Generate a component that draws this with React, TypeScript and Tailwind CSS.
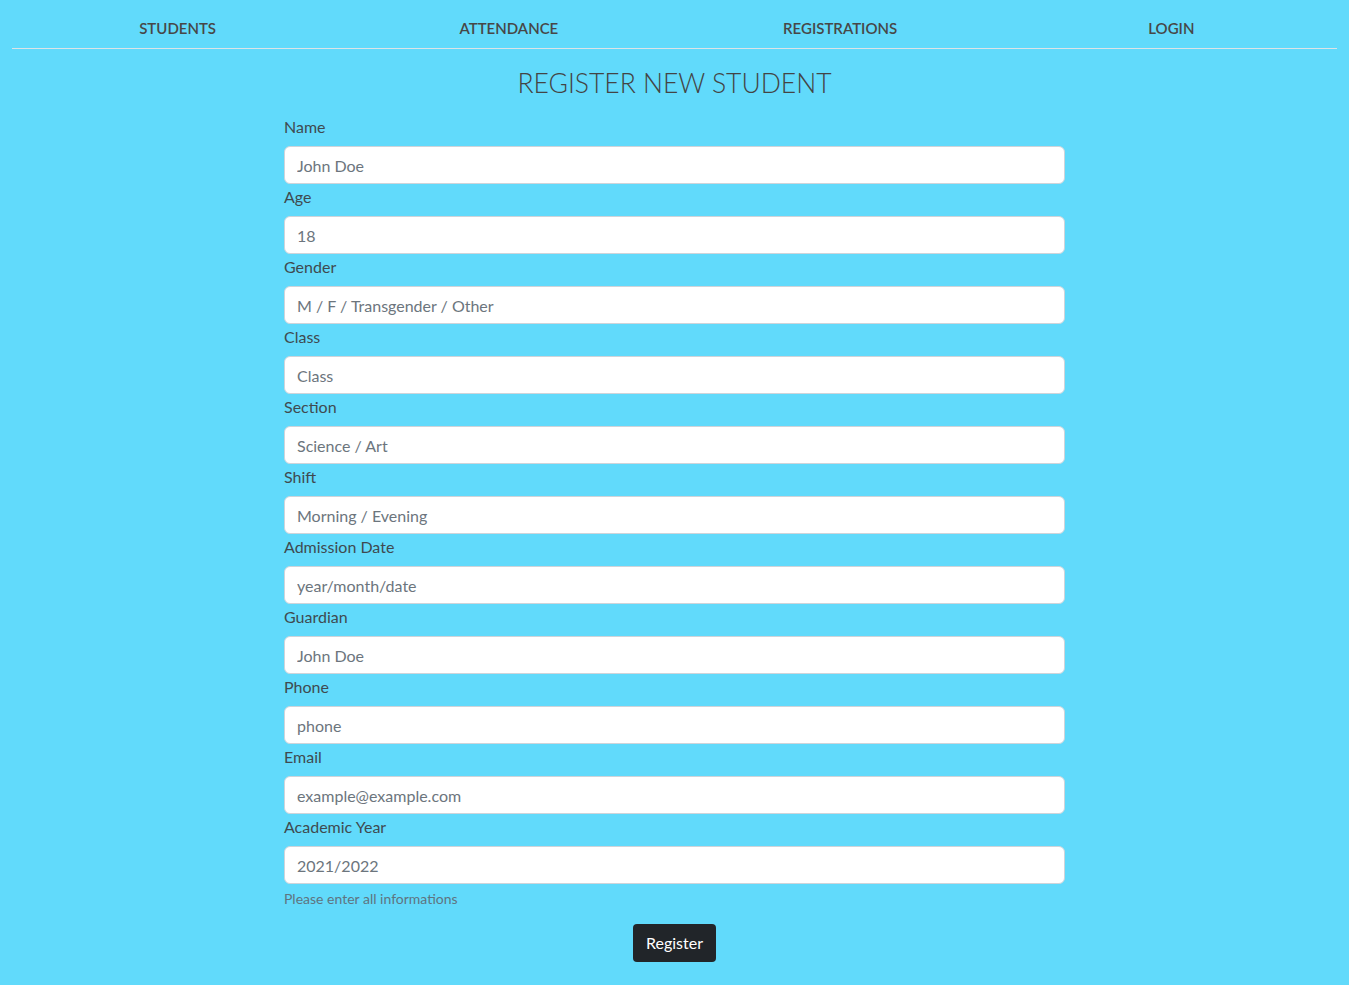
import React from "react";

const fields: [string, string][] = [
  ["Name", "John Doe"],
  ["Age", "18"],
  ["Gender", "M / F / Transgender / Other"],
  ["Class", "Class"],
  ["Section", "Science / Art"],
  ["Shift", "Morning / Evening"],
  ["Admission Date", "year/month/date"],
  ["Guardian", "John Doe"],
  ["Phone", "phone"],
  ["Email", "example@example.com"],
  ["Academic Year", "2021/2022"],
];

export default function App() {
  return (
    <div
      className="min-h-[985px] bg-[#61dafb] text-[#444]"
      style={{ fontFamily: '"Segoe UI", "Lato", "Noto Sans", sans-serif' }}
    >
      <nav className="mx-3 grid grid-cols-4 border-b border-[#dde3e6] h-[49px]">
        {["STUDENTS", "ATTENDANCE", "REGISTRATIONS", "LOGIN"].map((t) => (
          <div key={t} className="flex items-center justify-center text-[15px] font-semibold text-[#474747] pt-[8px]">
            {t}
          </div>
        ))}
      </nav>
      <h2 className="text-center text-[26.5px] font-light text-[#444] leading-[36px] mt-[16px] mb-[13px]">
        REGISTER NEW STUDENT
      </h2>
      <form className="mx-auto w-[781px]" onSubmit={(e) => e.preventDefault()}>
        {fields.map(([label, ph]) => (
          <div key={label}>
            <label className="block text-[16px] leading-[24px] pt-[1px] mb-[7px] text-[#3f4a50]">{label}</label>
            <input
              placeholder={ph}
              className="block w-full h-[38px] rounded-[6px] border border-[#ced4da] bg-white px-[12px] text-[16px] text-[#212529] placeholder:text-[#6c757d] outline-none"
            />
          </div>
        ))}
        <div className="mt-[4px] text-[14px] leading-[21px] text-[#5f7480]">Please enter all informations</div>
        <div className="flex justify-center mt-[15px]">
          <button className="h-[38px] w-[83px] rounded-[4px] bg-[#212529] text-white text-[16px]">Register</button>
        </div>
      </form>
    </div>
  );
}
